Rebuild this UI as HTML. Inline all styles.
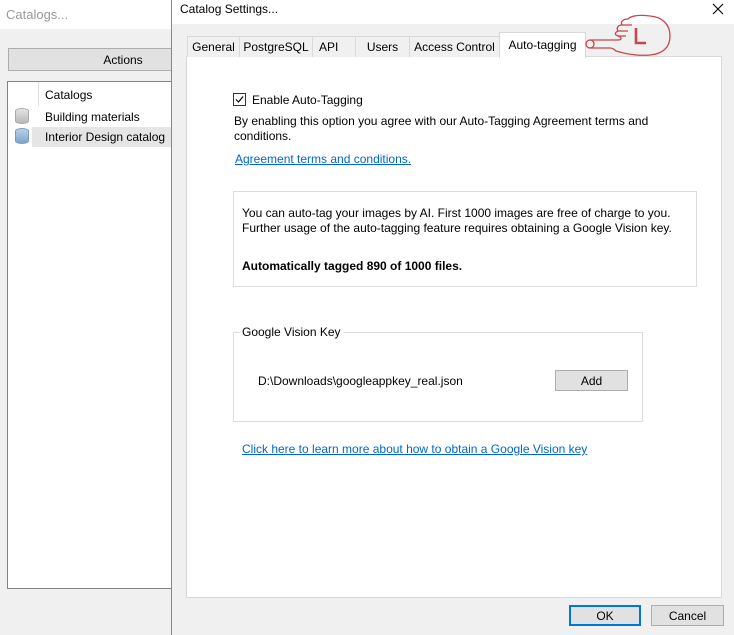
<!DOCTYPE html>
<html><head><meta charset="utf-8"><style>
*{margin:0;padding:0;box-sizing:border-box}
body{width:734px;height:635px;position:relative;overflow:hidden;background:#f0f0f0;font-family:"Liberation Sans",sans-serif;font-size:12px;color:#000}
.a{position:absolute;white-space:nowrap}
.tab{position:absolute;top:36px;height:21px;border:1px solid #d9d9d9;border-bottom:none;background:#f0f0f0;padding-top:3px;text-align:center}
a{color:#0066cc;text-decoration:underline}
</style></head><body>
<div class="a" style="left:0;top:0;width:172px;height:29px;background:#fff"></div>
<div class="a" style="left:6px;top:7px;color:#999;font-size:13px">Catalogs...</div>
<div class="a" style="left:8px;top:48px;width:170px;height:23px;background:#e1e1e1;border:1px solid #adadad;text-align:center;padding-top:4px;padding-left:60px">Actions</div>
<div class="a" style="left:7px;top:81px;width:170px;height:508px;background:#fff;border:1px solid #828282"></div>
<div class="a" style="left:38px;top:82px;width:1px;height:24px;background:#e0e0e0"></div>
<div class="a" style="left:45px;top:88px">Catalogs</div>
<div class="a" style="left:32px;top:127px;width:140px;height:20px;background:#e5e5e5"></div>
<div class="a" style="left:15px;top:108px;width:14px;height:16px;border-radius:7px/3px;background:linear-gradient(#e4e4e4,#b8b8b8);border:1px solid #aaa"></div>
<div class="a" style="left:15px;top:128px;width:14px;height:16px;border-radius:7px/3px;background:linear-gradient(#b8d0ea,#7fa4cc);border:1px solid #7a9cc0"></div>
<div class="a" style="left:45px;top:110px">Building materials</div>
<div class="a" style="left:45px;top:130px">Interior Design catalog</div>
<div class="a" style="left:171px;top:0;width:563px;height:635px;background:#f0f0f0;border-left:1px solid #888"></div>
<div class="a" style="left:172px;top:0;width:562px;height:24px;background:#fff"></div>
<div class="a" style="left:180px;top:2px">Catalog Settings...</div>
<svg class="a" style="left:712px;top:3px" width="12" height="12"><path d="M1 1L11 11M11 1L1 11" stroke="#000" stroke-width="1.1"/></svg>
<div class="a" style="left:186px;top:56px;width:536px;height:542px;background:#fff;border:1px solid #d9d9d9"></div>
<div class="tab" style="left:187px;width:53px">General</div>
<div class="tab" style="left:239px;width:74px">PostgreSQL</div>
<div class="tab" style="left:312px;width:44px;text-align:left;padding-left:6px">API</div>
<div class="tab" style="left:355px;width:55px">Users</div>
<div class="tab" style="left:409px;width:91px">Access Control</div>
<div class="tab" style="left:499px;top:32px;height:26px;width:87px;background:#fff;padding-top:5px">Auto-tagging</div>
<svg class="a" style="left:582px;top:12px" width="92" height="48" viewBox="0 0 92 48" fill="none" stroke="#c8474a" stroke-width="1.3">
<circle cx="8" cy="32" r="4"/>
<path d="M8 28H36C40 28 40 25 36 24C33 23 32 21 36 19C34 16 36 13 40 13C38 9 42 7 46 7C50 3 60 3 68 4C80 5 88 12 88 24C88 36 80 42 68 43C56 44 44 42 34 39C32 37 30 36 28 36H8"/>
<path d="M36 24H44M36 19H46M40 13H50"/>
<path d="M54 16V31H64" stroke-width="2.6"/>
</svg>
<div class="a" style="left:233px;top:93px;width:13px;height:13px;border:1px solid #333;background:#fff"></div>
<svg class="a" style="left:234px;top:94px" width="11" height="11"><path d="M2 5.5L4.5 8L9 2.5" stroke="#000" stroke-width="1.2" fill="none"/></svg>
<div class="a" style="left:252px;top:93px">Enable Auto-Tagging</div>
<div class="a" style="left:234px;top:114px">By enabling this option you agree with our Auto-Tagging Agreement terms and</div>
<div class="a" style="left:234px;top:129px">conditions.</div>
<div class="a" style="left:235px;top:152px"><a> Agreement terms and conditions.</a></div>
<div class="a" style="left:233px;top:191px;width:464px;height:96px;border:1px solid #dcdcdc"></div>
<div class="a" style="left:242px;top:206px">You can auto-tag your images by AI. First 1000 images are free of charge to you.</div>
<div class="a" style="left:242px;top:221px">Further usage of the auto-tagging feature requires obtaining a Google Vision key.</div>
<div class="a" style="left:242px;top:259px;font-weight:bold">Automatically tagged 890 of 1000 files.</div>
<div class="a" style="left:233px;top:332px;width:410px;height:90px;border:1px solid #dcdcdc"></div>
<div class="a" style="left:240px;top:325px;background:#fff;padding:0 2px">Google Vision Key</div>
<div class="a" style="left:258px;top:374px">D:\Downloads\googleappkey_real.json</div>
<div class="a" style="left:555px;top:370px;width:73px;height:21px;background:#e1e1e1;border:1px solid #adadad;text-align:center;padding-top:3px">Add</div>
<div class="a" style="left:242px;top:442px"><a>Click here to learn more about how to obtain a Google Vision key</a></div>
<div class="a" style="left:569px;top:605px;width:72px;height:21px;background:#e1e1e1;border:2px solid #0078d7;text-align:center;padding-top:2px">OK</div>
<div class="a" style="left:651px;top:605px;width:73px;height:21px;background:#e1e1e1;border:1px solid #adadad;text-align:center;padding-top:3px">Cancel</div>
</body></html>
